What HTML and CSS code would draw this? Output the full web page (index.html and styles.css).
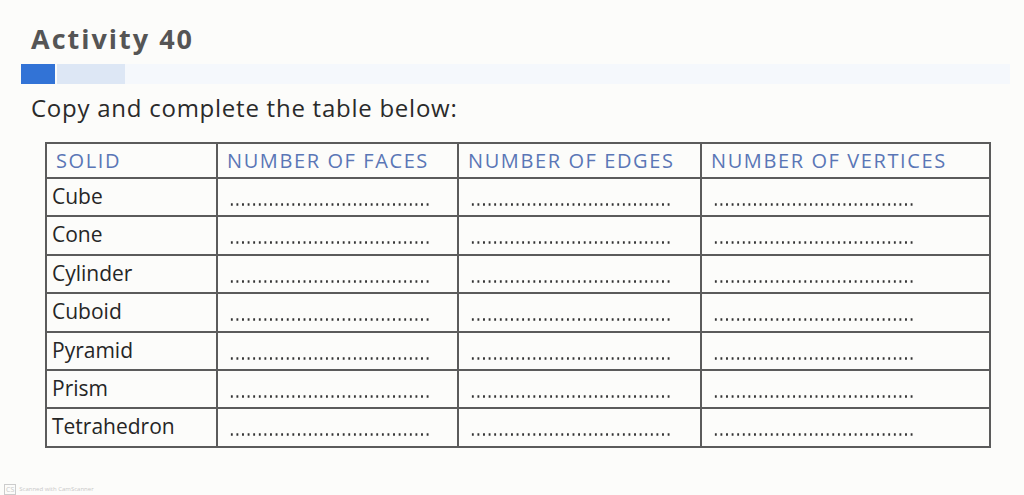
FILE: index.html
```html
<!DOCTYPE html>
<html>
<head>
<meta charset="utf-8">
<link rel="stylesheet" href="styles.css">
</head>
<body>
<div class="page">
  <h1 class="title">Activity 40</h1>
  <div class="band">
    <span class="band-dark"></span>
    <span class="band-light"></span>
    <span class="band-faint"></span>
  </div>
  <p class="intro">Copy and complete the table below:</p>
  <table class="grid">
    <colgroup>
      <col class="w1"><col class="w2"><col class="w3"><col class="w4">
    </colgroup>
    <thead>
      <tr>
        <th>SOLID</th>
        <th>NUMBER OF FACES</th>
        <th>NUMBER OF EDGES</th>
        <th>NUMBER OF VERTICES</th>
      </tr>
    </thead>
    <tbody>
      <tr><td>Cube</td><td><span class="dots"></span></td><td><span class="dots"></span></td><td><span class="dots"></span></td></tr>
      <tr><td>Cone</td><td><span class="dots"></span></td><td><span class="dots"></span></td><td><span class="dots"></span></td></tr>
      <tr><td>Cylinder</td><td><span class="dots"></span></td><td><span class="dots"></span></td><td><span class="dots"></span></td></tr>
      <tr><td>Cuboid</td><td><span class="dots"></span></td><td><span class="dots"></span></td><td><span class="dots"></span></td></tr>
      <tr><td>Pyramid</td><td><span class="dots"></span></td><td><span class="dots"></span></td><td><span class="dots"></span></td></tr>
      <tr><td>Prism</td><td><span class="dots"></span></td><td><span class="dots"></span></td><td><span class="dots"></span></td></tr>
      <tr><td>Tetrahedron</td><td><span class="dots"></span></td><td><span class="dots"></span></td><td><span class="dots"></span></td></tr>
    </tbody>
  </table>
  <div class="footer"><span class="cs">CS</span><span class="scan">Scanned with CamScanner</span></div>
</div>
</body>
</html>
```

FILE: styles.css
```css
html, body {
  margin: 0;
  padding: 0;
  background: #fcfcfa;
}
body {
  font-family: "Open Sans", "Noto Sans", sans-serif;
  color: #222;
  font-variant-ligatures: none;
}
.page {
  width: 1024px;
  height: 495px;
  box-sizing: border-box;
  padding: 22px 0 0 0;
  display: flex;
  flex-direction: column;
}
.title {
  margin: 0 0 0 31px;
  font-size: 27px;
  line-height: 34px;
  font-weight: 700;
  letter-spacing: 2px;
  color: #555;
}
.band {
  display: flex;
  margin: 8px 14px 0 21px;
  height: 20px;
}
.band-dark {
  width: 34px;
  background: #3273d6;
}
.band-light {
  width: 68px;
  margin-left: 2px;
  background: #dde7f5;
}
.band-faint {
  flex: 1;
  background: #f5f8fc;
}
.intro {
  margin: 8px 0 0 31px;
  font-size: 24px;
  line-height: 32px;
  letter-spacing: 0.75px;
  color: #2a2a2a;
}
.grid {
  margin: 18px 0 0 45px;
  width: 944px;
  border-collapse: collapse;
  table-layout: fixed;
}
.w1 { width: 171px; }
.w2 { width: 241px; }
.w3 { width: 243px; }
.w4 { width: 289px; }
.grid th, .grid td {
  border: 2px solid #5b5b5b;
  padding: 0;
}
.grid th {
  height: 33px;
  text-align: left;
  font-size: 20px;
  font-weight: 400;
  letter-spacing: 1.6px;
  color: #5a76b6;
  padding-left: 9px;
  white-space: nowrap;
}
.grid td {
  height: 36.4px;
  font-size: 21px;
  color: #262626;
  padding-left: 5px;
  vertical-align: top;
  line-height: 34px;
}
.dots {
  display: block;
  width: 200px;
  height: 3px;
  margin: 24px 0 0 6px;
  background-image: radial-gradient(circle, #333 1px, transparent 1.4px);
  background-size: 5.6px 3px;
  background-repeat: repeat-x;
}
.footer {
  margin: 36px 0 0 4px;
  display: flex;
  align-items: center;
  gap: 3px;
  color: #c8c8c8;
}
.cs {
  font-size: 7px;
  border: 1px solid #ccc;
  padding: 0 1px;
  line-height: 9px;
}
.scan {
  font-size: 6px;
}
```
